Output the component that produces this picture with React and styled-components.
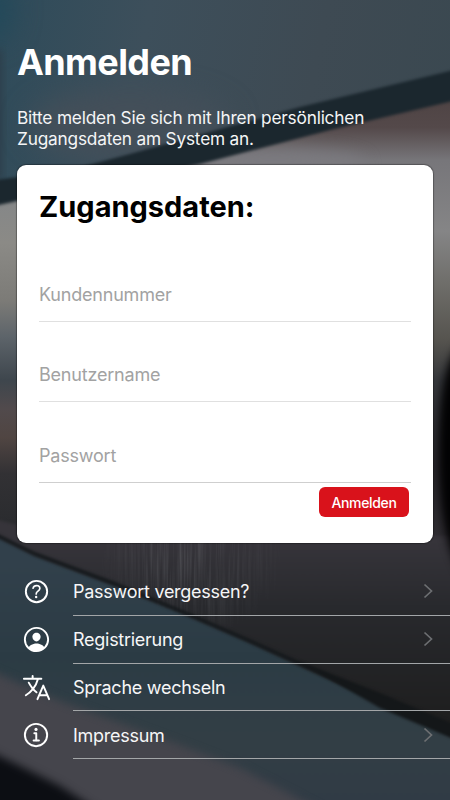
/**
 *
 * Login
 *
 */

import React from 'react';
import styled, { createGlobalStyle } from 'styled-components';
import {
  IoHelpCircleOutline,
  IoPersonCircleOutline,
  IoLanguageOutline,
  IoInformationCircleOutline,
} from 'react-icons/io5';

const GlobalStyle = createGlobalStyle`
  * {
    box-sizing: border-box;
  }

  body {
    margin: 0;
    background: #2b363e;
    font-family: Inter, 'Liberation Sans', sans-serif;
  }
`;

const Screen = styled.main`
  position: relative;
  display: flex;
  flex-direction: column;
  width: 450px;
  height: 800px;
  overflow: hidden;
  isolation: isolate;
`;

const BackdropSvg = styled.svg`
  position: absolute;
  inset: 0;
  z-index: -1;

  filter {
    color-interpolation-filters: sRGB;
  }
`;

const Header = styled.header`
  padding: 40px 17px 0;
  color: white;
`;

const Title = styled.h1`
  margin: 0;
  font-size: 36px;
  line-height: 44px;
  font-weight: 700;
  letter-spacing: -0.6px;
`;

const Intro = styled.p`
  margin: 23px 0 0;
  font-size: 17.3px;
  line-height: 21px;
  letter-spacing: -0.21px;
  color: #f4f5f6;
`;

const Card = styled.form`
  display: flex;
  flex-direction: column;
  height: 378px;
  margin: 16px 17px 0;
  padding: 24px 22px 0;
  border-radius: 9px;
  background: white;
  box-shadow: 0 0 1px 1px rgba(0, 0, 0, 0.3);
`;

const CardTitle = styled.h2`
  margin: 0 0 16px;
  font-size: 29px;
  line-height: 36px;
  font-weight: 700;
  color: black;
`;

const Field = styled.input`
  display: block;
  width: 372px;
  height: 80.5px;
  padding: 27px 0 0;
  border: 0;
  border-bottom: 1px solid ${props => props.$line || '#e0e0e0'};
  border-radius: 0;
  outline: none;
  background: transparent;
  font-family: inherit;
  font-size: 18px;
  letter-spacing: -0.2px;
  color: black;

  &::placeholder {
    color: #a2a2a2;
    opacity: 1;
  }
`;

const SubmitButton = styled.button`
  align-self: flex-end;
  width: 90px;
  height: 30px;
  margin: 4px 2px 0 0;
  padding: 1px 0 0;
  border: 0;
  border-radius: 6px;
  background: #d9121b;
  font-family: inherit;
  font-size: 14px;
  font-weight: 500;
  letter-spacing: -0.35px;
  color: white;
`;

const Menu = styled.nav`
  display: flex;
  flex-direction: column;
  margin-top: 25px;
  padding-left: 21px;
`;

const MenuItem = styled.a`
  display: flex;
  align-items: center;
  height: 47.8px;
  color: white;
  text-decoration: none;

  svg {
    flex: none;
  }
`;

const MenuBody = styled.div`
  display: flex;
  flex: 1;
  align-items: center;
  justify-content: space-between;
  height: 100%;
  margin-left: 21px;
  padding-right: 16px;
  border-bottom: 1px solid #a3a6a8;
`;

const MenuLabel = styled.span`
  padding-top: 2px;
  font-size: 18px;
  line-height: 24px;
  letter-spacing: -0.27px;
  color: #f6f6f7;
`;

// blurred workshop scene behind the whole screen
function Backdrop() {
  return (
    <BackdropSvg width="450" height="800" viewBox="0 0 450 800" aria-hidden="true">
      <defs>
        <linearGradient id="wall" x1="0" y1="0" x2="1" y2="0.35">
          <stop offset="0" stopColor="#2e4b5a" />
          <stop offset="0.3" stopColor="#3d4f5b" />
          <stop offset="0.65" stopColor="#3e4a53" />
          <stop offset="1" stopColor="#3a4850" />
        </linearGradient>
        <linearGradient id="edgeLeft" x1="0" y1="200" x2="0" y2="560" gradientUnits="userSpaceOnUse">
          <stop offset="0" stopColor="#858788" />
          <stop offset="0.12" stopColor="#8b8a86" />
          <stop offset="0.28" stopColor="#7c7b77" />
          <stop offset="0.38" stopColor="#5d646a" />
          <stop offset="0.5" stopColor="#3e464d" />
          <stop offset="0.58" stopColor="#514a4c" />
          <stop offset="0.66" stopColor="#504542" />
          <stop offset="0.76" stopColor="#323134" />
          <stop offset="1" stopColor="#25282b" />
        </linearGradient>
        <linearGradient id="edgeRight" x1="0" y1="90" x2="0" y2="560" gradientUnits="userSpaceOnUse">
          <stop offset="0" stopColor="#4d4242" />
          <stop offset="0.08" stopColor="#54494a" />
          <stop offset="0.15" stopColor="#77767a" />
          <stop offset="0.3" stopColor="#858586" />
          <stop offset="0.42" stopColor="#6d6c68" />
          <stop offset="0.53" stopColor="#56544f" />
          <stop offset="0.62" stopColor="#35373b" />
          <stop offset="0.8" stopColor="#28262a" />
          <stop offset="1" stopColor="#302e33" />
        </linearGradient>
        <linearGradient id="wood" x1="0" y1="540" x2="0" y2="730" gradientUnits="userSpaceOnUse">
          <stop offset="0" stopColor="#36343a" />
          <stop offset="0.35" stopColor="#28292d" />
          <stop offset="1" stopColor="#1d1d1d" />
        </linearGradient>
        <linearGradient id="bench" x1="0" y1="560" x2="0" y2="800" gradientUnits="userSpaceOnUse">
          <stop offset="0" stopColor="#31404b" />
          <stop offset="0.4" stopColor="#2b3b44" />
          <stop offset="0.75" stopColor="#323e45" />
          <stop offset="1" stopColor="#303b45" />
        </linearGradient>
        <radialGradient id="grainFade">
          <stop offset="0" stopColor="#fff" />
          <stop offset="1" stopColor="#000" />
        </radialGradient>
        <mask id="grainMask">
          <ellipse cx="190" cy="560" rx="95" ry="80" fill="url(#grainFade)" />
        </mask>
        {/* noise stretched vertically gives the wood fibres */}
        <filter id="fibres" x="0" y="0" width="100%" height="100%">
          <feTurbulence type="fractalNoise" baseFrequency="0.35 0.012" numOctaves="3" seed="4" />
          <feColorMatrix values="0 0 0 0 0.62  0 0 0 0 0.63  0 0 0 0 0.65  1.6 0 0 0 -0.58" />
        </filter>
        <filter id="soft1" x="-10%" y="-10%" width="120%" height="120%">
          <feGaussianBlur stdDeviation="1.7" />
        </filter>
        <filter id="soft4" x="-20%" y="-40%" width="140%" height="180%">
          <feGaussianBlur stdDeviation="4" />
        </filter>
        <filter id="soft8" x="-40%" y="-150%" width="180%" height="400%">
          <feGaussianBlur stdDeviation="8" />
        </filter>
        <filter id="soft14" x="-150%" y="-150%" width="400%" height="400%">
          <feGaussianBlur stdDeviation="14" />
        </filter>
      </defs>
      <rect width="450" height="800" fill="url(#wall)" />
      <ellipse cx="-10" cy="10" rx="22" ry="30" fill="#22495a" filter="url(#soft14)" />
      <rect x="-20" y="50" width="22" height="130" fill="#2e3e4a" filter="url(#soft4)" />
      <ellipse cx="130" cy="125" rx="100" ry="35" fill="#444f59" filter="url(#soft14)" />
      {/* metal surface */}
      <path d="M-20 190L180 160L330 120L470 85V570H-20Z" fill="url(#edgeRight)" />
      <path d="M-20 195H225V570H-20Z" fill="url(#edgeLeft)" />
      <ellipse cx="275" cy="164" rx="90" ry="15" fill="#7b7a7f" filter="url(#soft8)" />
      {/* dark ledge */}
      <path
        d="M-20 182L70 170L130 154L300 107L470 66V97L330 130L200 164L17 201L-20 209Z"
        fill="#1b272e"
        filter="url(#soft1)"
      />
      {/* wood board */}
      <path d="M-20 515L17 525V536H480V745H400L180 625L-20 530Z" fill="url(#wood)" filter="url(#soft1)" />
      <g mask="url(#grainMask)" opacity="0.32">
        <rect x="80" y="540" width="230" height="100" filter="url(#fibres)" />
      </g>
      {/* opening on the right */}
      <path d="M480 325C447 345 440 380 439 440C439 510 443 560 480 600Z" fill="#020203" filter="url(#soft4)" />
      {/* bench top */}
      <path
        d="M-20 529L35 556L115 586L190 617L250 643L310 671L380 702L470 744V820H-20Z"
        fill="url(#bench)"
        filter="url(#soft1)"
      />
      <path
        d="M-20 527L35 554L115 584L190 615L250 641L310 668L380 699L470 740"
        fill="none"
        stroke="#14181b"
        strokeWidth="3.5"
        filter="url(#soft1)"
      />
      <path d="M300 662L380 693L480 735V750L380 708Z" fill="#141719" filter="url(#soft1)" />
      {/* floor strip */}
      <path d="M-20 666L60 701L180 745L240 768L340 820H-20Z" fill="#45454c" filter="url(#soft4)" />
      <path d="M-20 747L20 766L60 786L105 815H-20Z" fill="#0c0e13" filter="url(#soft4)" />
    </BackdropSvg>
  );
}

function Chevron() {
  return (
    <svg width="11" height="16" viewBox="0 0 11 16" fill="none" aria-hidden="true">
      <path d="M1.5 1.5L8.5 8L1.5 14.5" stroke="#6d6f72" strokeWidth="1.7" />
    </svg>
  );
}

const menuItems = [
  { label: 'Passwort vergessen?', icon: IoHelpCircleOutline, chevron: true },
  { label: 'Registrierung', icon: IoPersonCircleOutline, chevron: true },
  { label: 'Sprache wechseln', icon: IoLanguageOutline, chevron: false },
  { label: 'Impressum', icon: IoInformationCircleOutline, chevron: true },
];

function App() {
  return (
    <Screen>
      <GlobalStyle />
      <Backdrop />
      <Header>
        <Title>Anmelden</Title>
        <Intro>
          Bitte melden Sie sich mit Ihren persönlichen
          <br />
          Zugangsdaten am System an.
        </Intro>
      </Header>
      <Card onSubmit={event => event.preventDefault()}>
        <CardTitle>Zugangsdaten:</CardTitle>
        <Field type="text" placeholder="Kundennummer" />
        <Field type="text" placeholder="Benutzername" />
        <Field type="password" placeholder="Passwort" $line="#cfcfcf" />
        <SubmitButton type="submit">Anmelden</SubmitButton>
      </Card>
      <Menu>
        {menuItems.map(({ label, icon: Icon, chevron }) => (
          <MenuItem key={label} href="#">
            <Icon size={31} />
            <MenuBody>
              <MenuLabel>{label}</MenuLabel>
              {chevron && <Chevron />}
            </MenuBody>
          </MenuItem>
        ))}
      </Menu>
    </Screen>
  );
}

export default App;
